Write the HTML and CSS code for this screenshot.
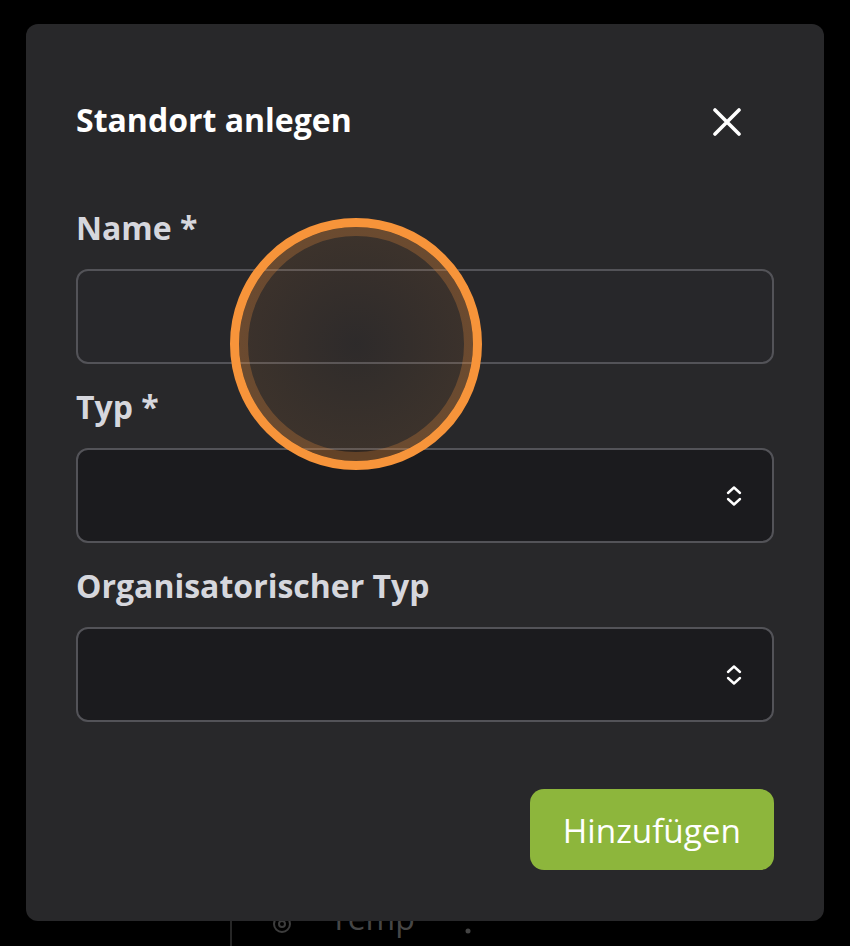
FILE: index.html
```html
<!DOCTYPE html>
<html lang="de">
<head>
<meta charset="utf-8">
<title>Standort anlegen</title>
<link rel="stylesheet" href="styles.css">
</head>
<body>
<div class="app">
  <main class="main">
    <div class="row">
      <svg class="row-icon" width="20" height="20" viewBox="0 0 20 20"><circle cx="10" cy="10" r="8" fill="none" stroke="#3c3c3c" stroke-width="2"/><circle cx="10" cy="10" r="3" fill="none" stroke="#3c3c3c" stroke-width="2"/></svg>
      <span class="row-text">Temp</span>
      <svg class="row-menu" width="6" height="32" viewBox="0 0 6 32"><circle cx="3" cy="3" r="2.5" fill="#444"/><circle cx="3" cy="16" r="2.5" fill="#444"/><circle cx="3" cy="29" r="2.5" fill="#444"/></svg>
    </div>
  </main>
</div>

<div class="overlay">
  <section class="modal">
    <header class="modal-header">
      <h2 class="modal-title">Standort anlegen</h2>
      <button class="close" aria-label="Schließen">
        <svg width="28" height="28" viewBox="0 0 28 28"><path d="M2 2 L26 26 M26 2 L2 26" stroke="#fff" stroke-width="3.6" stroke-linecap="round" fill="none"/></svg>
      </button>
    </header>

    <label class="label label-first">Name *</label>
    <div class="field field-input"></div>

    <label class="label">Typ *</label>
    <div class="field field-select">
      <svg class="chevrons" width="16" height="22" viewBox="0 0 16 22"><path d="M2 8 L8 2.5 L14 8 M2 14 L8 19.5 L14 14" stroke="#fff" stroke-width="2.4" stroke-linecap="round" stroke-linejoin="round" fill="none"/></svg>
    </div>

    <label class="label">Organisatorischer Typ</label>
    <div class="field field-select">
      <svg class="chevrons" width="16" height="22" viewBox="0 0 16 22"><path d="M2 8 L8 2.5 L14 8 M2 14 L8 19.5 L14 14" stroke="#fff" stroke-width="2.4" stroke-linecap="round" stroke-linejoin="round" fill="none"/></svg>
    </div>

    <footer class="modal-footer">
      <button class="primary">Hinzufügen</button>
    </footer>
  </section>
</div>

<div class="tap"></div>
</body>
</html>
```

FILE: styles.css
```css
html, body {
  margin: 0;
  padding: 0;
}

body {
  background: #000;
  font-family: "Open Sans", "Noto Sans", sans-serif;
  width: 850px;
  height: 946px;
  overflow: hidden;
}

.app {
  height: 946px;
}

.main {
  padding-top: 896px;
  padding-left: 230px;
}

.row {
  display: flex;
  align-items: flex-start;
  height: 50px;
  border-left: 2px solid #262626;
  padding-left: 40px;
}

.row-icon {
  margin-top: 18px;
}

.row-text {
  font-size: 32px;
  line-height: 44px;
  color: #464646;
  margin-left: 38px;
}

.row-menu {
  margin-top: 6px;
  margin-left: 50px;
}

.overlay {
  position: fixed;
  inset: 0;
  padding: 24px 26px 25px;
  display: flex;
}

.modal {
  flex: 1;
  background: #28282a;
  border-radius: 12px;
  padding: 76px 50px 51px;
  display: flex;
  flex-direction: column;
}

.modal-header {
  display: flex;
  align-items: center;
  justify-content: space-between;
  height: 40px;
}

.modal-title {
  margin: 0;
  font-size: 32px;
  line-height: 40px;
  font-weight: 700;
  color: #fff;
}

.close {
  background: none;
  border: 0;
  padding: 0;
  margin-right: 33px;
  margin-top: 4px;
  display: flex;
}

.label {
  display: block;
  font-size: 32px;
  line-height: 40px;
  font-weight: 700;
  color: #d6d7dd;
  margin: 23px 0 21px;
}

.label-first {
  margin-top: 68px;
}

.field {
  box-sizing: border-box;
  height: 95px;
  border: 2px solid #535358;
  border-radius: 12px;
  display: flex;
  align-items: center;
  justify-content: flex-end;
  padding-right: 30px;
}

.field-input {
  background: #27272a;
}

.field-select {
  background: #1b1b1e;
}

.modal-footer {
  margin-top: auto;
  display: flex;
  justify-content: flex-end;
}

.primary {
  height: 81px;
  padding: 0 33px;
  border: 0;
  border-radius: 14px;
  background: #8db63c;
  color: #fff;
  font-family: "Open Sans", "Noto Sans", sans-serif;
  font-size: 33.3px;
  font-weight: 400;
}

.tap {
  position: fixed;
  left: 230px;
  top: 218px;
  width: 252px;
  height: 252px;
  box-sizing: border-box;
  border-radius: 50%;
  border: 9px solid #f7943a;
  box-shadow: inset 0 0 0 9px rgba(247, 148, 58, 0.25);
  background: radial-gradient(circle closest-side, rgba(247, 148, 58, 0.03), rgba(247, 148, 58, 0.1));
}
```
